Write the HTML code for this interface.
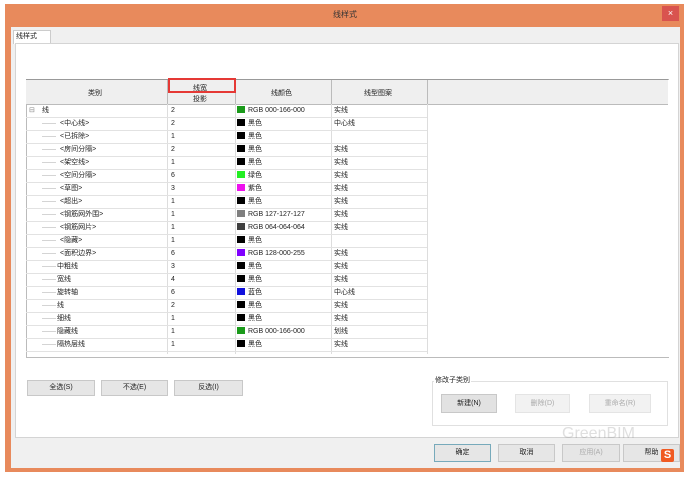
<!DOCTYPE html><html><head><meta charset="utf-8"><style>
body{margin:0;width:690px;height:483px;background:#fff;position:relative;overflow:hidden;font-family:"Liberation Sans","Noto Sans CJK SC",sans-serif;font-size:7px;color:#222}
.a{position:absolute}
.btn{position:absolute;background:#e6e6e6;border:1px solid #c8c8c8;text-align:center;font-size:7px;box-sizing:border-box}
.row{position:absolute;left:26px;width:401px;height:13px;border-bottom:1px solid #e2e2e2;box-sizing:border-box}
.row span{position:absolute;top:0;line-height:12px;white-space:nowrap}
.sw{display:inline-block;width:8px;height:7px;vertical-align:-1px;margin-right:3px}
</style></head><body>
<div class="a" style="left:5px;top:4px;width:679px;height:468px;background:#e88a5c"></div>
<div class="a" style="left:0;top:9px;width:690px;text-align:center;font-size:8px;color:#333">线样式</div>
<div class="a" style="left:662px;top:6px;width:17px;height:15px;background:#d9534f;color:#fff;text-align:center;font-size:9px;line-height:15px">×</div>
<div class="a" style="left:11px;top:27px;width:669px;height:441px;background:#f0f0f0"></div>
<div class="a" style="left:13px;top:30px;width:34px;height:13px;background:#fff;border:1px solid #ccc;border-bottom:none;font-size:7px;padding-left:2px;line-height:12px">线样式</div>
<div class="a" style="left:15px;top:43px;width:662px;height:393px;background:#fff;border:1px solid #d4d4d4"></div>
<div class="a" style="left:26px;top:79px;width:642px;height:277px;border:1px solid #bbb;border-right:none;background:#fff"></div>
<div class="a" style="left:26px;top:79px;width:642px;height:24px;background:#efefef;border-bottom:1px solid #bbb;border-top:1px solid #999"></div>
<div class="a" style="left:167px;top:80px;width:1px;height:24px;background:#bbb"></div>
<div class="a" style="left:235px;top:80px;width:1px;height:24px;background:#bbb"></div>
<div class="a" style="left:331px;top:80px;width:1px;height:24px;background:#bbb"></div>
<div class="a" style="left:427px;top:80px;width:1px;height:24px;background:#bbb"></div>
<div class="a" style="left:88px;top:88px">类别</div>
<div class="a" style="left:193px;top:83px">线宽</div>
<div class="a" style="left:193px;top:94px">投影</div>
<div class="a" style="left:271px;top:88px">线颜色</div>
<div class="a" style="left:364px;top:88px">线型图案</div>
<div class="a" style="left:168px;top:78px;width:68px;height:15px;border:2px solid #e53935;box-sizing:border-box"></div>
<div class="a" style="left:167px;top:104px;width:1px;height:250px;background:#ddd"></div>
<div class="a" style="left:235px;top:104px;width:1px;height:250px;background:#ddd"></div>
<div class="a" style="left:331px;top:104px;width:1px;height:250px;background:#ddd"></div>
<div class="a" style="left:427px;top:104px;width:1px;height:250px;background:#ddd"></div>
<div id="rows"></div>
<script>
var d=[["线","2","#1a9a1a","RGB 000-166-000","实线",0],
["<中心线>","2","#000","黑色","中心线",1],["<已拆除>","1","#000","黑色","",1],["<房间分隔>","2","#000","黑色","实线",1],["<架空线>","1","#000","黑色","实线",1],["<空间分隔>","6","#22ee22","绿色","实线",1],["<草图>","3","#ee11ee","紫色","实线",1],["<超出>","1","#000","黑色","实线",1],["<钢筋网外围>","1","#7f7f7f","RGB 127-127-127","实线",1],["<钢筋网片>","1","#404040","RGB 064-064-064","实线",1],["<隐藏>","1","#000","黑色","",1],["<面积边界>","6","#8000ff","RGB 128-000-255","实线",1],["中粗线","3","#000","黑色","实线",2],["宽线","4","#000","黑色","实线",2],["旋转轴","6","#1010dd","蓝色","中心线",2],["线","2","#000","黑色","实线",2],["细线","1","#000","黑色","实线",2],["隐藏线","1","#1a9a1a","RGB 000-166-000","划线",2],["隔热层线","1","#000","黑色","实线",2]];
var h="";d.forEach(function(r,i){var t=105+i*13;var n=r[0].replace(/</g,"&lt;").replace(/>/g,"&gt;");
var pre=i==0?'<span style="left:3px;color:#888">⊟</span><span style="left:16px">'+n+'</span>':'<span style="left:16px;color:#aaa">——</span><span style="left:'+(r[5]==1?34:31)+'px">'+n+'</span>';
h+='<div class="row" style="top:'+t+'px">'+pre+'<span style="left:145px">'+r[1]+'</span><span style="left:211px"><i class="sw" style="background:'+r[2]+'"></i>'+r[3]+'</span><span style="left:308px">'+r[4]+'</span></div>';});
document.getElementById("rows").innerHTML=h;
</script>
<div class="btn" style="left:27px;top:380px;width:68px;height:16px;line-height:14px">全选(S)</div>
<div class="btn" style="left:101px;top:380px;width:67px;height:16px;line-height:14px">不选(E)</div>
<div class="btn" style="left:174px;top:380px;width:69px;height:16px;line-height:14px">反选(I)</div>
<div class="a" style="left:432px;top:381px;width:234px;height:43px;border:1px solid #e0e0e0"></div>
<div class="a" style="left:434px;top:375px;background:#fff;padding:0 1px">修改子类别</div>
<div class="btn" style="left:441px;top:394px;width:56px;height:19px;line-height:17px;background:#e2e2e2">新建(N)</div>
<div class="btn" style="left:515px;top:394px;width:55px;height:19px;line-height:17px;background:#f2f2f2;color:#aaa;border-color:#e4e4e4">删除(D)</div>
<div class="btn" style="left:589px;top:394px;width:62px;height:19px;line-height:17px;background:#f2f2f2;color:#aaa;border-color:#e4e4e4">重命名(R)</div>
<div class="btn" style="left:434px;top:444px;width:57px;height:18px;line-height:16px;border-color:#7ab">确定</div>
<div class="btn" style="left:498px;top:444px;width:57px;height:18px;line-height:16px">取消</div>
<div class="btn" style="left:562px;top:444px;width:58px;height:18px;line-height:16px;color:#aaa">应用(A)</div>
<div class="btn" style="left:623px;top:444px;width:57px;height:18px;line-height:16px">帮助</div>
<div class="a" style="left:562px;top:425px;font-size:16px;color:rgba(150,150,150,0.3)">GreenBIM</div>
<div class="a" style="left:661px;top:449px;width:13px;height:13px;background:#f05a22;color:#fff;font-weight:bold;font-size:11px;text-align:center;line-height:13px;border-radius:2px">S</div>
</body></html>
